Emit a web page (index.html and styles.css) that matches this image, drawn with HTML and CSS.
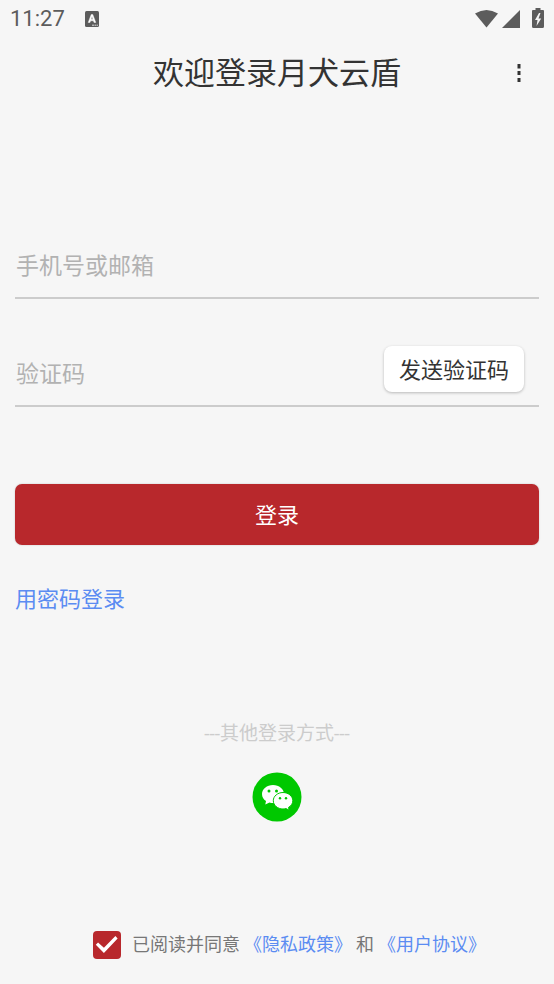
FILE: index.html
```html
<!DOCTYPE html>
<html lang="zh-CN">
<head>
<meta charset="utf-8">
<meta name="viewport" content="width=device-width, initial-scale=1">
<title>欢迎登录月犬云盾</title>
<link rel="stylesheet" href="styles.css">
</head>
<body>
<div class="status">
  <span class="time">11:27</span>
  <svg class="notice" width="14" height="16" viewBox="0 0 14 16" aria-hidden="true">
    <rect width="14" height="16" rx="1.5" fill="#5c5c5c"/>
    <path d="M3.2 11.5 6.2 3.5H7.8L10.8 11.5H9L8.4 9.8H5.6L5 11.5ZM6.1 8.3H7.9L7 5.6Z" fill="#fff" stroke="#fff" stroke-width=".4"/>
    <path d="M7 14.2H13" stroke="#ddd" stroke-width="1" stroke-dasharray="2 .5"/>
  </svg>
  <svg class="signals" width="72" height="22" viewBox="0 0 72 22" fill="#5c5c5c" aria-hidden="true">
    <path d="M1 5.5Q12.500-1.500 24 5.500L12.500 19.500Z"/>
    <path d="M46 2V20H28Z"/>
    <path d="M61.500 0H66.500V2H69Q70 2 70 3V18.500Q70 20 68.500 20H59.500Q58 20 58 18.500V3Q58 2 59 2H61.500Z"/>
    <path d="M65 5 61 12H63.500L62.500 18 67.200 10.500H64.500L66.500 5Z" fill="#f5f5f5"/>
  </svg>
</div>
<header class="header">
  <h1>欢迎登录月犬云盾</h1>
  <button class="menu" type="button" aria-label="菜单">
    <svg width="4" height="20" viewBox="0 0 4 20" fill="#333"><path d="M.5 1H3.500V5.500H.5ZM.5 8H3.500V12H.5ZM.5 15H3.500V19H.5Z"/></svg>
  </button>
</header>
<main>
  <form class="form">
    <div class="field">
      <input class="entry" type="text" placeholder="手机号或邮箱" aria-label="手机号或邮箱">
    </div>
    <div class="field">
      <input class="entry" type="text" placeholder="验证码" aria-label="验证码">
      <button class="send" type="button">发送验证码</button>
    </div>
    <button class="login" type="button">登录</button>
    <a class="link password" href="#">用密码登录</a>
  </form>
  <section class="other">
    <p>---其他登录方式---</p>
    <button class="wechat" type="button" aria-label="微信登录">
      <svg width="50" height="50" viewBox="0 0 50 50">
        <circle cx="25" cy="25" r="24.500" fill="#00c800"/>
        <path d="M21 13C14.900 13 10 17 10 22C10 25 11.500 27.400 14 29L13.300 32.500 17.500 30.500Q19 31 21 31C27.100 31 32 27 32 22S27.100 13 21 13Z" fill="#fff"/>
        <path d="M31 20.500C25.600 20.500 21.300 24.200 21.300 28.700S25.600 37 31 37Q32.500 37 34 36.600L37.200 38.200 36.500 35.400C39.200 33.900 40.800 31.500 40.800 28.700C40.800 24.200 36.400 20.500 31 20.500Z" fill="#fff" stroke="#00c800"/>
        <g fill="#00c800"><circle cx="17" cy="19" r="1.500"/><circle cx="24.500" cy="19" r="1.500"/><circle cx="28" cy="26.200" r="1.200"/><circle cx="34" cy="26.200" r="1.200"/></g>
      </svg>
    </button>
  </section>
</main>
<footer class="agreement">
  <input id="agree" class="check" type="checkbox" checked>
  <div class="terms">
    <label for="agree">已阅读并同意</label>
    <a class="link" href="#">《隐私政策》</a>
    <span>和</span>
    <a class="link" href="#">《用户协议》</a>
  </div>
</footer>
</body>
</html>
```
FILE: styles.css
```css
* {
  box-sizing: border-box;
}

body {
  margin: 0;
  min-height: 100vh;
  display: flex;
  flex-direction: column;
  background: #f6f6f6;
  color: #333;
  font-family: Roboto, "Noto Sans CJK SC", sans-serif;
}

button,
input {
  font: inherit;
  color: inherit;
  margin: 0;
}

button {
  padding: 0;
  border: 0;
  background: none;
  cursor: pointer;
}

svg {
  display: block;
}

.status {
  display: flex;
  align-items: center;
  height: 38px;
  padding: 0 8px 0 10px;
}

.time {
  font-size: 22px;
  line-height: 24px;
  color: #5c5c5c;
}

.notice {
  margin-left: 20px;
}

.signals {
  margin-left: auto;
}

.header {
  display: grid;
  grid-template-columns: 40px 1fr 40px;
  align-items: center;
  height: 70px;
  padding: 0 15px;
}

h1 {
  grid-column: 2;
  margin: 0;
  padding-top: 2px;
  font-size: 31px;
  line-height: 40px;
  font-weight: 400;
  text-align: center;
}

.menu {
  display: flex;
  align-items: center;
  justify-content: center;
  height: 40px;
}

main {
  flex: 1;
  padding: 123px 15px 0;
}

.form {
  display: flex;
  flex-direction: column;
}

.field {
  display: flex;
  align-items: center;
  height: 68px;
  margin-bottom: 40px;
  padding-right: 15px;
  border-bottom: 2px solid #ccc;
}

.entry {
  flex: 1;
  min-width: 0;
  height: 40px;
  padding: 4px 0 0 1px;
  border: 0;
  outline: 0;
  background: none;
  font-size: 23px;
}

.entry::placeholder {
  color: #b2b2b2;
  opacity: 1;
}

.send {
  height: 46px;
  margin-bottom: 7px;
  padding: 0 15px 2px;
  border-radius: 8px;
  background: #fff;
  box-shadow: 0 1px 3px rgba(0, 0, 0, 0.25);
  font-size: 22px;
}

.login {
  height: 61px;
  margin-top: 37px;
  padding-bottom: 3px;
  border-radius: 7px;
  background: #b8282c;
  box-shadow: 0 0 2px rgba(0, 0, 0, 0.2);
  color: #fff;
  font-size: 22px;
}

.link {
  color: #5b8cf2;
  text-decoration: none;
}

.password {
  align-self: flex-start;
  margin-top: 39px;
  font-size: 22px;
  line-height: 32px;
}

.other {
  display: flex;
  flex-direction: column;
  align-items: center;
  gap: 24px;
  margin-top: 104px;
}

.other p {
  margin: 0;
  color: #ccc;
  font-size: 19px;
  line-height: 28px;
}

.agreement {
  display: flex;
  align-items: center;
  justify-content: center;
  gap: 11px;
  padding: 0 0 25px 25px;
  font-size: 18px;
  line-height: 28px;
  color: #777;
}

.check {
  appearance: none;
  display: grid;
  width: 28px;
  height: 28px;
  border-radius: 4px;
  background: #b8282c;
}

.check:checked::before {
  content: "";
  background: #fff;
  clip-path: polygon(10% 51%, 18% 43%, 39% 62%, 80% 20%, 88% 29%, 39% 80%);
}

.terms {
  display: flex;
  gap: 4px;
  padding-top: 1px;
}
```
